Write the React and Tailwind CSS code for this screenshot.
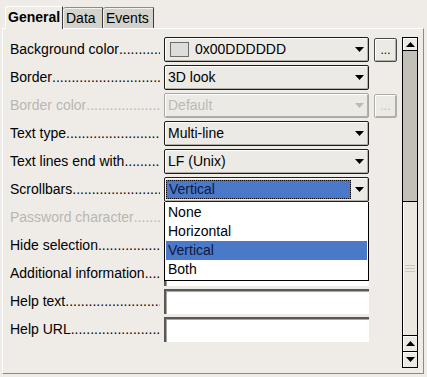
import React from "react";

const rows = [
  { label: "Background color", kind: "color", button: true },
  { label: "Border", kind: "select", value: "3D look" },
  { label: "Border color", kind: "select", value: "Default", button: true, disabled: true },
  { label: "Text type", kind: "select", value: "Multi-line" },
  { label: "Text lines end with", kind: "select", value: "LF (Unix)" },
  { label: "Scrollbars", kind: "focus", value: "Vertical" },
  { label: "Password character", kind: "text", disabled: true },
  { label: "Hide selection", kind: "select", value: "No" },
  { label: "Additional information", kind: "text" },
  { label: "Help text", kind: "text" },
  { label: "Help URL", kind: "text" },
];

const options = ["None", "Horizontal", "Vertical", "Both"];

function Arrow({ dir = "down", disabled }) {
  const fill = disabled ? "#bdbab4" : "#000";
  return (
    <svg width="9" height="5" viewBox="0 0 9 5" className="block">
      {dir === "down" ? <polygon points="0,0 9,0 4.5,5" fill={fill} /> : <polygon points="0,5 9,5 4.5,0" fill={fill} />}
    </svg>
  );
}

function Label({ text, disabled }) {
  return (
    <div className={`flex w-[150px] shrink-0 mr-[4px] overflow-hidden whitespace-nowrap ${disabled ? "text-[#b9b6b0]" : "text-black"}`}>
      <span>{text}</span>
      <span className="overflow-hidden">{".".repeat(40)}</span>
    </div>
  );
}

function DropBox({ disabled, children }) {
  return (
    <div
      className={`flex h-[25px] w-[205px] shrink-0 items-center overflow-hidden rounded-[2px] border bg-[#eceae5] shadow-[inset_1px_1px_0_#ffffff,inset_-1px_-1px_0_#b3b0aa] ${
        disabled ? "border-[#a9a6a0] text-[#bdbab4]" : "border-[#1c1c1c] text-black"
      }`}
    >
      <div className="flex min-w-0 flex-1 items-center">{children}</div>
      <div className="mr-[4px] shrink-0">
        <Arrow disabled={disabled} />
      </div>
    </div>
  );
}

function Control({ row }) {
  if (row.kind === "color") {
    return (
      <DropBox>
        <span className="ml-[5px] h-[15px] w-[19px] shrink-0 border border-[#6f6d69] bg-[#dddddd]" />
        <span className="ml-[6px]">0x00DDDDDD</span>
      </DropBox>
    );
  }
  if (row.kind === "select") {
    return (
      <DropBox disabled={row.disabled}>
        <span className="ml-[3px]">{row.value}</span>
      </DropBox>
    );
  }
  if (row.kind === "focus") {
    return (
      <div className="relative w-[205px] shrink-0">
        <DropBox>
          <span className="mb-[1px] ml-[1px] mr-[4px] flex h-[19px] min-w-0 flex-1 items-center border border-dotted border-black bg-[#4b79c9] pl-[2px] text-[#10183a]">
            {row.value}
          </span>
        </DropBox>
        <div className="absolute left-0 top-[25px] z-20 h-[79px] w-[205px] border border-t-0 border-black bg-white px-[1px] pt-[1px]">
          {options.map((o) => (
            <div
              key={o}
              className={`flex h-[19px] items-center pl-[2px] ${o === "Vertical" ? "bg-[#4b79c9] text-[#10183a]" : "text-black"}`}
            >
              {o}
            </div>
          ))}
        </div>
      </div>
    );
  }
  return (
    <div className="h-[25px] w-[205px] shrink-0 border-l-2 border-t-2 border-l-[#5a5856] border-t-[#5a5856] bg-white shadow-[inset_1px_1px_0_#a9a6a0]" />
  );
}

function DotsButton({ disabled }) {
  return (
    <div
      className={`ml-[5px] flex h-[24px] w-[23px] shrink-0 items-end justify-center rounded-[2px] border bg-[#eceae5] pb-[5px] text-[12px] leading-none shadow-[inset_1px_1px_0_#ffffff,inset_-1px_-1px_0_#b3b0aa] ${
        disabled ? "border-[#aeaba5] text-[#c0bdb7]" : "border-[#4a4846] text-black"
      }`}
    >
      ...
    </div>
  );
}

function ScrollButton({ dir, top }) {
  return (
    <div
      className={`flex items-center justify-center bg-[#eceae5] shadow-[inset_1px_1px_0_#ffffff] ${
        top ? "h-[13px] border-b border-black" : "h-[16px] border-t border-black"
      }`}
    >
      <Arrow dir={dir} />
    </div>
  );
}

function Scrollbar() {
  return (
    <div className="ml-[5px] flex h-[331px] w-[16px] shrink-0 flex-col border border-black">
      <ScrollButton dir="up" top />
      <div className="h-[150px] bg-[#c3c0b9]" />
      <div className="flex flex-1 flex-col items-center justify-center border-t border-black bg-[#ebe8e2] shadow-[inset_1px_0_0_#ffffff]">
        <div className="flex w-[10px] flex-col gap-[2px]">
          <div className="h-px bg-[#c9c6c0]" />
          <div className="h-px bg-[#c9c6c0]" />
          <div className="h-px bg-[#c9c6c0]" />
        </div>
      </div>
      <ScrollButton dir="up" />
      <ScrollButton dir="down" />
    </div>
  );
}

export default function App() {
  return (
    <div className="h-[377px] w-[427px] overflow-hidden bg-[#efece8] font-['Liberation_Sans',Arial,sans-serif] text-[14px]">
      <div className="relative z-10 flex items-end pl-[5px] pt-[6px]">
        <div className="flex h-[23px] w-[58px] items-center rounded-tl-[3px] border-l border-r border-t border-l-white border-r-[#3c3b39] border-t-white bg-[#efece8] pb-[1px] pl-[2px] font-bold">
          General
        </div>
        <div className="mb-px flex h-[21px] w-[40px] items-center rounded-tl-[3px] border-r border-t border-r-[#3c3b39] border-t-[#8e8b85] bg-[#d5d2cc] pl-[3px] shadow-[inset_1px_1px_0_#f4f2ee]">
          Data
        </div>
        <div className="mb-px flex h-[21px] w-[51px] items-center rounded-tl-[3px] border-r border-t border-r-[#3c3b39] border-t-[#8e8b85] bg-[#d5d2cc] pl-[3px] shadow-[inset_1px_1px_0_#f4f2ee]">
          Events
        </div>
      </div>
      <div className="-mt-px ml-[2px] flex h-[346px] w-[422px] border border-b-[#8d8a84] border-l-white border-r-[#8d8a84] border-t-white pl-[7px] pt-[8px]">
        <div className="flex flex-col gap-[3px]">
          {rows.map((row) => (
            <div key={row.label} className="flex h-[25px] items-center">
              <Label text={row.label} disabled={row.disabled} />
              <Control row={row} />
              {row.button ? <DotsButton disabled={row.disabled} /> : <div className="ml-[5px] w-[23px] shrink-0" />}
            </div>
          ))}
        </div>
        <Scrollbar />
      </div>
    </div>
  );
}
